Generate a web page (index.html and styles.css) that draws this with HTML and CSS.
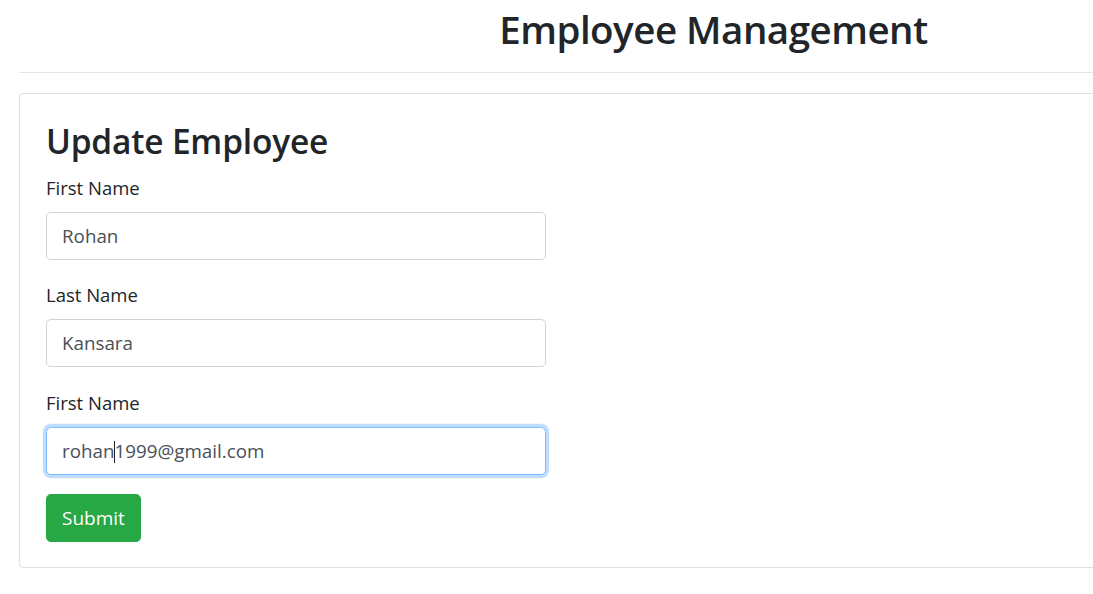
FILE: index.html
```html
<!DOCTYPE html>
<html lang="en">
<head>
<meta charset="utf-8">
<title>Employee Management</title>
<link rel="stylesheet" href="styles.css">
</head>
<body>
<div class="page">
  <h1 class="title">Employee Management</h1>
  <hr class="divider">
  <div class="card">
    <div class="card-body">
      <h2 class="card-title">Update Employee</h2>
      <form class="form">
        <div class="form-group">
          <label class="label" for="fn">First Name</label>
          <input class="control" id="fn" type="text" value="Rohan">
        </div>
        <div class="form-group">
          <label class="label" for="ln">Last Name</label>
          <input class="control" id="ln" type="text" value="Kansara">
        </div>
        <div class="form-group group-last">
          <label class="label">First Name</label>
          <div class="control control-focus">rohan<span class="caret"></span>1999@gmail.com</div>
        </div>
        <button class="btn-submit" type="button">Submit</button>
      </form>
    </div>
  </div>
</div>
</body>
</html>
```

FILE: styles.css
```css
html {
  overflow: hidden;
}
body {
  margin: 0;
  font-family: "Open Sans", "Noto Sans", "Liberation Sans", sans-serif;
  color: #212529;
  background: #fff;
}
.page {
  width: 1389px;
  margin-left: 19px;
}
.title {
  margin: 5px 0 0;
  font-size: 38.5px;
  font-weight: 600;
  line-height: 48px;
  text-align: center;
  letter-spacing: -0.5px;
}
.divider {
  margin: 19px 0 20px;
  border: 0;
  border-top: 1px solid rgba(0, 0, 0, 0.1);
}
.card {
  border: 1px solid rgba(0, 0, 0, 0.125);
  border-radius: 4px;
}
.card-body {
  padding: 28px 26px 25px;
}
.card-title {
  margin: 0 0 13px;
  font-size: 33.5px;
  font-weight: 600;
  line-height: 38px;
  letter-spacing: -0.2px;
}
.form {
  display: flex;
  flex-direction: column;
  align-items: flex-start;
}
.form-group {
  display: flex;
  flex-direction: column;
  width: 500px;
  margin-bottom: 20px;
}
.group-last {
  margin-top: 1px;
  margin-bottom: 19px;
}
.label {
  font-size: 18.5px;
  line-height: 30px;
  margin-bottom: 9px;
}
.control {
  box-sizing: border-box;
  width: 500px;
  height: 48px;
  padding: 8px 15px;
  font-family: inherit;
  font-size: 18.8px;
  line-height: 30px;
  color: #495057;
  background: #fff;
  border: 1px solid #ced4da;
  border-radius: 4.8px;
  outline: none;
}
.control-focus {
  border-color: #80bdff;
  box-shadow: 0 0 0 3.2px rgba(0, 123, 255, 0.25);
}
.caret {
  display: inline-block;
  width: 1px;
  height: 22px;
  margin-right: -1px;
  vertical-align: -5px;
  background: #212529;
}
.btn-submit {
  height: 48px;
  padding: 0 15px;
  font-family: inherit;
  font-size: 19px;
  color: #fff;
  background: #28a745;
  border: 1px solid #28a745;
  border-radius: 4.8px;
}
```
